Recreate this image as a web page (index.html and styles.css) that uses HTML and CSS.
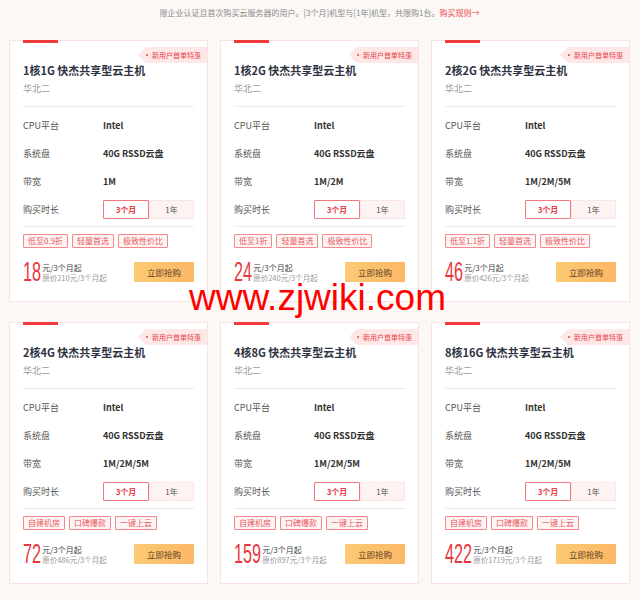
FILE: index.html
```html
<!DOCTYPE html>
<html lang="zh">
<head>
<meta charset="utf-8">
<link rel="stylesheet" href="styles.css">
</head>
<body>
<div class="page">
  <p class="notice">限企业认证且首次购买云服务器的用户。[3个月]机型与[1年]机型，共限购1台。<span class="rule">购买规则→</span></p>
  <div class="grid">
    <div class="card">
      <div class="bar"></div>
      <div class="badge"><i class="dot"></i>新用户首单特惠</div>
      <h3 class="title">1核1G 快杰共享型云主机</h3>
      <div class="region">华北二</div>
      <div class="divider"></div>
      <div class="row"><span class="label">CPU平台</span><span class="val">Intel</span></div>
      <div class="row"><span class="label">系统盘</span><span class="val">40G RSSD云盘</span></div>
      <div class="row"><span class="label">带宽</span><span class="val">1M</span></div>
      <div class="row"><span class="label">购买时长</span><div class="seg"><span class="opt on">3个月</span><span class="opt">1年</span></div></div>
      <div class="divider d2"></div>
      <div class="tags"><span class="tag">低至0.9折</span><span class="tag">轻量首选</span><span class="tag">极致性价比</span></div>
      <div class="foot"><span class="num" style="--n:2">18</span><div class="pinfo"><span class="unit">元/3个月起</span><span class="orig">原价210元/3个月起</span></div><span class="buy">立即抢购</span></div>
    </div>
    <div class="card">
      <div class="bar"></div>
      <div class="badge"><i class="dot"></i>新用户首单特惠</div>
      <h3 class="title">1核2G 快杰共享型云主机</h3>
      <div class="region">华北二</div>
      <div class="divider"></div>
      <div class="row"><span class="label">CPU平台</span><span class="val">Intel</span></div>
      <div class="row"><span class="label">系统盘</span><span class="val">40G RSSD云盘</span></div>
      <div class="row"><span class="label">带宽</span><span class="val">1M/2M</span></div>
      <div class="row"><span class="label">购买时长</span><div class="seg"><span class="opt on">3个月</span><span class="opt">1年</span></div></div>
      <div class="divider d2"></div>
      <div class="tags"><span class="tag">低至1折</span><span class="tag">轻量首选</span><span class="tag">极致性价比</span></div>
      <div class="foot"><span class="num" style="--n:2">24</span><div class="pinfo"><span class="unit">元/3个月起</span><span class="orig">原价240元/3个月起</span></div><span class="buy">立即抢购</span></div>
    </div>
    <div class="card">
      <div class="bar"></div>
      <div class="badge"><i class="dot"></i>新用户首单特惠</div>
      <h3 class="title">2核2G 快杰共享型云主机</h3>
      <div class="region">华北二</div>
      <div class="divider"></div>
      <div class="row"><span class="label">CPU平台</span><span class="val">Intel</span></div>
      <div class="row"><span class="label">系统盘</span><span class="val">40G RSSD云盘</span></div>
      <div class="row"><span class="label">带宽</span><span class="val">1M/2M/5M</span></div>
      <div class="row"><span class="label">购买时长</span><div class="seg"><span class="opt on">3个月</span><span class="opt">1年</span></div></div>
      <div class="divider d2"></div>
      <div class="tags"><span class="tag">低至1.1折</span><span class="tag">轻量首选</span><span class="tag">极致性价比</span></div>
      <div class="foot"><span class="num" style="--n:2">46</span><div class="pinfo"><span class="unit">元/3个月起</span><span class="orig">原价426元/3个月起</span></div><span class="buy">立即抢购</span></div>
    </div>
    <div class="card">
      <div class="bar"></div>
      <div class="badge"><i class="dot"></i>新用户首单特惠</div>
      <h3 class="title">2核4G 快杰共享型云主机</h3>
      <div class="region">华北二</div>
      <div class="divider"></div>
      <div class="row"><span class="label">CPU平台</span><span class="val">Intel</span></div>
      <div class="row"><span class="label">系统盘</span><span class="val">40G RSSD云盘</span></div>
      <div class="row"><span class="label">带宽</span><span class="val">1M/2M/5M</span></div>
      <div class="row"><span class="label">购买时长</span><div class="seg"><span class="opt on">3个月</span><span class="opt">1年</span></div></div>
      <div class="divider d2"></div>
      <div class="tags"><span class="tag">自建机房</span><span class="tag">口碑爆款</span><span class="tag">一键上云</span></div>
      <div class="foot"><span class="num" style="--n:2">72</span><div class="pinfo"><span class="unit">元/3个月起</span><span class="orig">原价486元/3个月起</span></div><span class="buy">立即抢购</span></div>
    </div>
    <div class="card">
      <div class="bar"></div>
      <div class="badge"><i class="dot"></i>新用户首单特惠</div>
      <h3 class="title">4核8G 快杰共享型云主机</h3>
      <div class="region">华北二</div>
      <div class="divider"></div>
      <div class="row"><span class="label">CPU平台</span><span class="val">Intel</span></div>
      <div class="row"><span class="label">系统盘</span><span class="val">40G RSSD云盘</span></div>
      <div class="row"><span class="label">带宽</span><span class="val">1M/2M/5M</span></div>
      <div class="row"><span class="label">购买时长</span><div class="seg"><span class="opt on">3个月</span><span class="opt">1年</span></div></div>
      <div class="divider d2"></div>
      <div class="tags"><span class="tag">自建机房</span><span class="tag">口碑爆款</span><span class="tag">一键上云</span></div>
      <div class="foot"><span class="num" style="--n:3">159</span><div class="pinfo"><span class="unit">元/3个月起</span><span class="orig">原价897元/3个月起</span></div><span class="buy">立即抢购</span></div>
    </div>
    <div class="card">
      <div class="bar"></div>
      <div class="badge"><i class="dot"></i>新用户首单特惠</div>
      <h3 class="title">8核16G 快杰共享型云主机</h3>
      <div class="region">华北二</div>
      <div class="divider"></div>
      <div class="row"><span class="label">CPU平台</span><span class="val">Intel</span></div>
      <div class="row"><span class="label">系统盘</span><span class="val">40G RSSD云盘</span></div>
      <div class="row"><span class="label">带宽</span><span class="val">1M/2M/5M</span></div>
      <div class="row"><span class="label">购买时长</span><div class="seg"><span class="opt on">3个月</span><span class="opt">1年</span></div></div>
      <div class="divider d2"></div>
      <div class="tags"><span class="tag">自建机房</span><span class="tag">口碑爆款</span><span class="tag">一键上云</span></div>
      <div class="foot"><span class="num" style="--n:3">422</span><div class="pinfo"><span class="unit">元/3个月起</span><span class="orig">原价1719元/3个月起</span></div><span class="buy">立即抢购</span></div>
    </div>
  </div>
  <div class="watermark">www.zjwiki.com</div>
</div>
</body>
</html>
```

FILE: styles.css
```css
* { box-sizing: border-box; }
html, body { margin: 0; padding: 0; }
body {
  background: #fbf8f5;
  font-family: "Noto Sans CJK SC", "Noto Sans", sans-serif;
  color: #333;
  width: 640px;
  height: 600px;
  overflow: hidden;
}
.page { position: relative; padding: 6px 10px 0 9px; }
.notice {
  margin: 0 0 20px;
  text-align: center;
  font-size: 8px;
  line-height: 14px;
  color: #8a8a8a;
}
.rule { color: #f0494c; }
.grid {
  display: grid;
  grid-template-columns: repeat(3, 199px);
  column-gap: 12px;
  row-gap: 20px;
}
.card {
  position: relative;
  background: #fff;
  border: 1px solid #f8e3e0;
  padding: 0 13px 19px;
}
.bar { width: 35px; height: 3px; background: #f03a3c; margin-top: -1px; }
.badge {
  position: absolute;
  top: 6px;
  right: 0;
  height: 16px;
  width: 69px;
  padding-left: 14px;
  background: #fde7e7;
  clip-path: polygon(8px 0, 100% 0, 100% 100%, 8px 100%, 0 50%);
  color: #ea4548;
  font-size: 7px;
  line-height: 16px;
  white-space: nowrap;
}
.dot {
  position: absolute;
  left: 8px;
  top: 7px;
  width: 2px;
  height: 2px;
  border-radius: 50%;
  background: #ea4548;
}
.title {
  margin: 19px 0 0;
  font-size: 11px;
  line-height: 16px;
  font-weight: 700;
  color: #2f3342;
}
.region { margin-top: 4px; font-size: 9px; line-height: 14px; color: #9a9a9a; }
.divider { height: 1px; background: #f9e7e5; margin-top: 10px; }
.divider + .row { margin-top: 4px; }
.row { display: flex; align-items: center; height: 28px; font-size: 9px; }
.label { width: 80px; color: #555; }
.val { font-weight: 700; color: #333; }
.seg { display: flex; }
.opt {
  width: 45px;
  height: 19px;
  line-height: 17px;
  text-align: center;
  font-size: 8px;
  color: #555;
  background: #fdf3f3;
  border: 1px solid #fbe6e6;
}
.opt.on {
  width: 46px;
  background: #fff;
  border-color: #f07a7b;
  color: #e5404a;
  font-weight: 700;
  border-radius: 1px;
}
.divider.d2 { margin-top: 3px; }
.tags { display: flex; gap: 4px; margin-top: 7px; }
.tag {
  height: 14px;
  padding: 0 4px;
  line-height: 12px;
  font-size: 8px;
  color: #e8585c;
  background: #fff4f4;
  border: 1px solid #f4888a;
  border-radius: 1px;
}
.foot { display: flex; align-items: center; margin-top: 14px; height: 20px; }
.num {
  display: inline-block;
  font-family: "Liberation Sans", sans-serif;
  font-size: 28px;
  line-height: 20px;
  color: #e8383d;
  transform: scaleX(0.58);
  transform-origin: left center;
  margin-right: calc(var(--n) * -6.5px + 1px);
}
.pinfo { display: flex; flex-direction: column; margin-top: 2px; }
.unit { font-size: 8px; line-height: 10px; color: #444; }
.orig { font-size: 7.5px; line-height: 10px; color: #999; white-space: nowrap; }
.buy {
  margin-left: auto;
  width: 60px;
  height: 20px;
  line-height: 20px;
  text-align: center;
  font-size: 8.5px;
  color: #5a3d22;
  background: linear-gradient(90deg, #fcca74, #fdb766);
  border-radius: 1px;
}
.watermark {
  position: absolute;
  left: 189px;
  top: 279px;
  font-family: "Liberation Sans", Arial, sans-serif;
  font-size: 37px;
  line-height: 37px;
  color: #ff0000;
  white-space: nowrap;
}
```
